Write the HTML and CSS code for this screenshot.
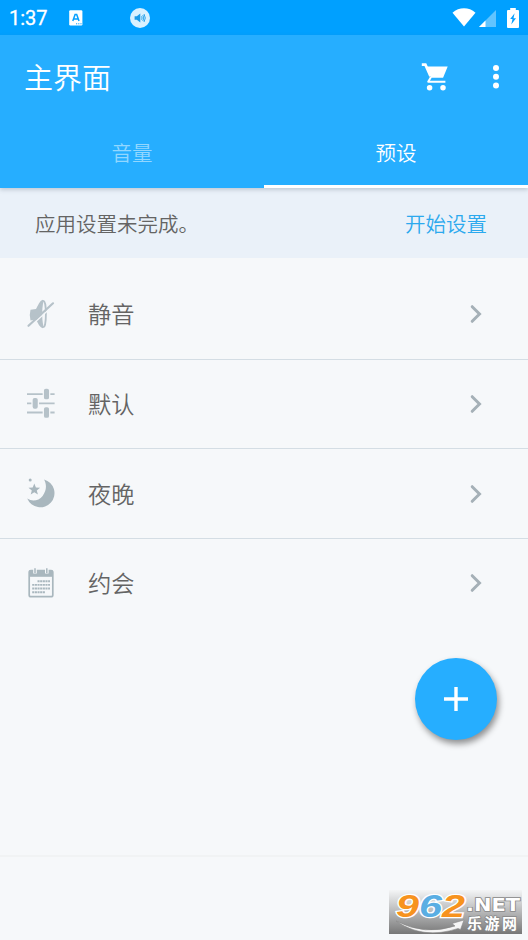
FILE: index.html
```html
<!DOCTYPE html>
<html lang="zh-CN">
<head>
<meta charset="utf-8">
<title>主界面</title>
<link rel="stylesheet" href="styles.css">
</head>
<body>
<div class="app">
  <div class="status">
    <span class="time">1:37</span>
    <svg class="ic-a" width="14" height="16" viewBox="0 0 14 16"><rect x=".2" y=".2" width="13.2" height="15.2" rx="1.2" fill="#fff"/><path d="M3.800 11 6.100 4.500h1.600L10 11M4.800 9h4.200" fill="none" stroke="#07a0ff" stroke-width="1.500"/><path d="M7 13.800h1.200m1 0h1.200m1 0h1.200" stroke="#07a0ff" stroke-width="1"/></svg>
    <svg class="ic-snd" width="20" height="20" viewBox="0 0 20 20"><circle cx="10" cy="10" r="10" fill="#d9f1ff"/><path d="M4.600 8.200h2.200L10.300 5.500v9L6.800 11.800H4.600z" fill="#1b9be8"/><path d="M11.600 8.300q1 1.700 0 3.400M12.800 7q2 3 0 6M14 6q2.600 4 0 8" fill="none" stroke="#1b9be8" stroke-width=".9"/></svg>
    <div class="status-right">
      <svg width="24" height="19" viewBox="0 0 24 19"><path d="M.5 4.700C7-1.200 17-1.200 23.500 4.700L12 18.500z" fill="#fff"/></svg>
      <svg class="ic-sig" width="17" height="17" viewBox="0 0 17 17"><path d="M0 17 17 0v17z" fill="#fff" opacity=".38"/><path d="M0 17l6.500-6.500V17z" fill="#fff"/></svg>
      <svg class="ic-bat" width="12" height="20" viewBox="0 0 12 20"><path d="M3.200 0h5.600v2H11a1 1 0 0 1 1 1v16a1 1 0 0 1-1 1H1a1 1 0 0 1-1-1V3a1 1 0 0 1 1-1h2.200z" fill="#fff"/><path d="M7.600 5.200 3.200 11h2.300l-1.200 5.600L9 10.200H6.500z" fill="#07a0ff"/></svg>
    </div>
  </div>
  <div class="head">
    <header class="bar">
      <h1>主界面</h1>
      <svg class="ic-cart" width="28" height="28" viewBox="0 0 28 28"><path d="M.8 1.600H4.400L9.500 13.200" fill="none" stroke="#fff" stroke-width="2.700"/><path d="M5.200 3.600H26.700L22.100 14.800H10z" fill="#fff"/><path d="M10 14 7.200 18.700H24.400" fill="none" stroke="#fff" stroke-width="2" stroke-linejoin="round"/><circle cx="8.600" cy="24.700" r="2.750" fill="#fff"/><circle cx="22" cy="24.700" r="2.750" fill="#fff"/></svg>
      <svg class="ic-more" width="6" height="24" viewBox="0 0 6 24" fill="#fff"><circle cx="3" cy="3" r="3"/><circle cx="3" cy="11.700" r="3"/><circle cx="3" cy="20.400" r="3"/></svg>
    </header>
    <nav class="tabs">
      <div class="tab">音量</div>
      <div class="tab active">预设</div>
    </nav>
  </div>
  <section class="notice"><span>应用设置未完成。</span><a>开始设置</a></section>
  <main class="list">
    <div class="row">
      <svg class="ic" width="30" height="32" viewBox="0 0 30 32"><path d="M4.500 11.800Q3 17 4.500 22.500L10 21.500C12 25 13.500 29.500 17 30.200V1.800C13.500 2.500 12 8 10 11z" fill="#b6c2c9"/><ellipse cx="17.600" cy="16" rx="2.300" ry="13.200" fill="#f6f8fa" stroke="#b6c2c9" stroke-width="1.800"/><path d="M3.500 29.300 28 6.800" stroke="#f6f8fa" stroke-width="1.500"/><path d="M2.500 27.800 27 5.300" stroke="#b6c2c9" stroke-width="2.200" stroke-linecap="round"/></svg>
      <span>静音</span><svg class="chev" width="12" height="20" viewBox="0 0 12 20"><path d="M2.200 2.700 9.500 10 2.200 17.300"/></svg>
    </div>
    <div class="row">
      <svg class="ic" width="30" height="32" viewBox="0 0 30 32"><path d="M1 6.100h27.600M1 15.300h27.600M1 24.500h27.600" stroke="#b6c2c9" stroke-width="1.800"/><g fill="#b6c2c9" stroke="#f6f8fa" stroke-width="1.300"><rect x="17.300" y="0" width="6.400" height="12" rx="2.500"/><rect x="6" y="9.300" width="6.400" height="12" rx="2.500"/><rect x="17.300" y="18.500" width="6.400" height="12" rx="2.500"/></g></svg>
      <span>默认</span><svg class="chev" width="12" height="20" viewBox="0 0 12 20"><path d="M2.200 2.700 9.500 10 2.200 17.300"/></svg>
    </div>
    <div class="row">
      <svg class="ic" width="30" height="32" viewBox="0 0 30 32" fill="#a9b7be"><g transform="translate(-.6 -.9)"><path d="M18.700 2.300A14.200 14.200 0 1 1 1.800 21.500C7 25 13.500 23.500 17.200 18.800 21.200 13.700 21.500 7.500 18.700 2.300z"/><path d="m8.900 6.300 1.600 4 4.200.3-3.300 2.700 1.100 4.100-3.600-2.200-3.600 2.200 1.100-4.100-3.300-2.700 4.200-.3z"/><circle cx="4.800" cy="3" r="1.500"/></g></svg>
      <span>夜晚</span><svg class="chev" width="12" height="20" viewBox="0 0 12 20"><path d="M2.200 2.700 9.500 10 2.200 17.300"/></svg>
    </div>
    <div class="row">
      <svg class="ic" width="30" height="32" viewBox="0 0 30 32"><rect x="3.200" y="3.500" width="23.600" height="26.200" rx="1.800" fill="none" stroke="#a9b7be" stroke-width="1.700"/><path d="M3 3.500h24v6.300H3z" fill="#a9b7be"/><path d="M9 1v5.500M20.800 1v5.500" stroke="#f6f8fa" stroke-width="3.600"/><path d="M9 1.200v4.800M20.800 1.200v4.800" stroke="#a9b7be" stroke-width="1.500"/><path d="M11.500 14.200H24M6.200 17.900H24M6.200 21.500H24M6.200 25.200H19" stroke="#a9b7be" stroke-width="1.900" stroke-dasharray="2.100 .55"/></svg>
      <span>约会</span><svg class="chev" width="12" height="20" viewBox="0 0 12 20"><path d="M2.200 2.700 9.500 10 2.200 17.300"/></svg>
    </div>
  </main>
  <footer class="foot"></footer>
  <button class="fab" aria-label="add"><svg width="24" height="24" viewBox="0 0 24 24"><path d="M12 0v24M0 12h24" stroke="#fff" stroke-width="3.400"/></svg></button>
  <svg class="mark" width="133" height="44" viewBox="0 0 133 44">
    <defs><linearGradient id="g" x2="0" y2="1"><stop offset="0" stop-color="#f4f5f6"/><stop offset=".45" stop-color="#bdbebf"/><stop offset="1" stop-color="#777"/></linearGradient></defs>
    <rect width="133" height="44" fill="url(#g)"/>
    <path d="M7 31Q36 46 66 36L63 33.500 75 30 71.500 39.500 69 38.500Q34 50 7 31z" fill="#f5f5f5" stroke="#888" stroke-width=".6"/>
    <g class="num"><text x="7" y="26.500" textLength="23" lengthAdjust="spacingAndGlyphs" fill="#f7931e">9</text><text x="30" y="26.500" textLength="23" lengthAdjust="spacingAndGlyphs" fill="#5aaee3">6</text><text x="53" y="26.500" textLength="23" lengthAdjust="spacingAndGlyphs" fill="#f7931e">2</text></g>
    <text class="net" x="77" y="20.500" textLength="54" lengthAdjust="spacingAndGlyphs">.NET</text>
    <text class="cn" x="78" y="39" textLength="50">乐游网</text>
  </svg>
</div>
</body>
</html>
```
FILE: styles.css
```css
* { box-sizing: border-box; }
body { margin: 0; font-family: Roboto, "Noto Sans CJK SC", sans-serif; font-weight: 350; }
svg { display: block; flex: none; }
.app { position: relative; display: flex; flex-direction: column; width: 528px; height: 940px; background: #f6f8fa; overflow: hidden; }
.status { display: flex; align-items: center; height: 35px; padding: 0 9px; background: #00a0ff; color: #fff; }
.time { width: 60px; font-size: 20px; line-height: 35px; font-weight: 400; padding-top: 2px; -webkit-text-stroke: .3px #fff; }
.ic-a { margin-top: 1px; }
.ic-snd { margin-left: 47px; }
.status-right { display: flex; align-items: center; margin-left: auto; }
.ic-sig { margin: 2px 11px 0 3px; }
.head { background: #26aeff; box-shadow: 0 2px 4px rgba(70, 90, 110, .25); z-index: 1; }
.bar { display: flex; align-items: center; height: 84px; padding: 0 29px 0 24px; color: #fff; }
h1 { margin: 3px auto 0 0; font-size: 29px; font-weight: 350; line-height: 84px; }
.ic-cart { margin: -1px 44px 0 0; }
.ic-more { margin-top: -1px; }
.tabs { display: flex; height: 69px; }
.tab { flex: 1; text-align: center; font-size: 20.5px; line-height: 70px; color: #92d7ff; }
.active { color: #fff; border-bottom: 3px solid #fff; }
.notice { display: flex; justify-content: space-between; height: 70px; padding: 0 41px 0 35px; background: #eaf1f9; font-size: 20.5px; line-height: 74px; color: #646464; }
.notice a { color: #2ca9ee; }
.list { padding-top: 12px; }
.row { display: flex; align-items: center; height: 89.7px; padding: 0 46px 0 26px; border-bottom: 1.5px solid #d4dde4; color: #646464; font-size: 23.2px; }
.row:last-child { height: 87.7px; border-bottom: 0; }
.row span { margin: -2px auto 0 32px; }
.chev { fill: none; stroke: #a5b0b7; stroke-width: 3; stroke-linecap: round; }
.foot { height: 85px; margin-top: auto; border-top: 2px solid #f1f3f4; }
.fab { position: absolute; left: 415px; top: 658px; display: flex; align-items: center; justify-content: center; width: 82px; height: 82px; padding: 0; border: 0; border-radius: 50%; background: #26aeff; box-shadow: 2px 4px 6px rgba(0, 0, 0, .42); }
.mark { position: absolute; left: 389px; top: 890px; overflow: visible; }
.num { font: italic 700 32px/1 "Liberation Sans", sans-serif; stroke: #fff; stroke-width: 2.5px; paint-order: stroke; }
.net, .cn { fill: #fff; stroke: #888; stroke-width: 1.5px; paint-order: stroke; }
.net { font: 700 17px/1 "DejaVu Sans", sans-serif; }
.cn { font: 700 15px/1 "Noto Sans CJK SC", sans-serif; }
```
